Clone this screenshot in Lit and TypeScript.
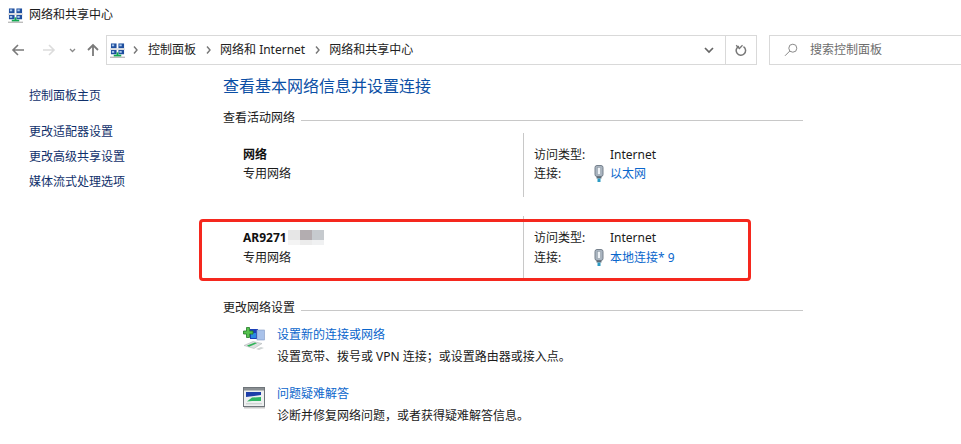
import { LitElement, html, css } from "lit";
import { customElement } from "lit/decorators.js";

const netIcon = (cls: string) => html`<svg class=${cls} viewBox="0 0 16 16" width="16" height="16">
  <rect x="1" y="0.500" width="6" height="5" fill="#1f4f9e"/><rect x="2" y="1.500" width="2.500" height="2" fill="#a9c8ee"/>
  <rect x="9" y="0.500" width="6" height="5" fill="#1f4f9e"/><rect x="10" y="1.500" width="2.500" height="2" fill="#a9c8ee"/>
  <rect x="0" y="6" width="16" height="1" fill="#c4c4c4"/>
  <rect x="1" y="7.500" width="6" height="4.500" fill="#1f4f9e"/><rect x="2" y="8.500" width="2.500" height="2" fill="#a9c8ee"/>
  <rect x="9" y="7.500" width="6" height="4.500" fill="#1f4f9e"/><rect x="10" y="8.500" width="2.500" height="2" fill="#a9c8ee"/>
  <rect x="7" y="10" width="2" height="3" fill="#12a850"/><rect x="4" y="12.500" width="8" height="2" fill="#12a850"/>
  <rect x="0" y="14.500" width="16" height="1.500" fill="#bdbdbd"/>
</svg>`;

const plug = html`<svg class="plug" viewBox="0 0 10 18" width="10" height="18">
  <rect x="1" y="0.500" width="8" height="11" rx="2" fill="#a9b4c0" stroke="#76818c"/>
  <rect x="3.500" y="2.500" width="3" height="7" fill="#eef2f6" stroke="#8c97a2" stroke-width="0.500"/>
  <rect x="2.500" y="11.500" width="5" height="2" fill="#5f6b76"/>
  <rect x="3.500" y="13.500" width="3" height="3.500" fill="#2d9bc4"/>
</svg>`;

const addIcon = html`<svg class="big" viewBox="0 0 22 24" width="22" height="24">
  <rect x="7" y="2" width="8" height="10" fill="#1a3fb8"/><rect x="8" y="6" width="5" height="5" fill="#2a8ae0"/>
  <rect x="14" y="3" width="7.500" height="10" fill="#a9c2ea" stroke="#8098c4" stroke-width="0.600"/>
  <path d="M3.500 0.500h3v3.500h3.500v3H6.500v3.500h-3V7H0.500V4h3z" fill="#56c24e" stroke="#1f7a26" stroke-width="0.800"/>
  <path d="M1 18.500l9-4 9 2-8 5z" fill="#dde0e0" stroke="#a8aeb0" stroke-width="0.500"/>
  <path d="M4 18.500l8-3 2 .8-8 3.500z" fill="#2fb358"/>
  <path d="M13 22l5-2 3 1-5 2z" fill="#cfd4d4"/>
</svg>`;

const fixIcon = html`<svg class="big low" viewBox="0 0 22 22" width="22" height="22">
  <rect x="0.500" y="0.500" width="21" height="19" fill="#eef0f0" stroke="#6f757a"/>
  <rect x="1" y="1" width="20" height="2.500" fill="#8a8f92"/>
  <path d="M3 5h15v3l-15 2z" fill="#1d3ea8"/>
  <path d="M18 10v4H9l-5 .5 5-4z" fill="#2fb562"/>
  <rect x="3" y="16" width="16" height="1.400" fill="#d0d4d4"/>
  <rect x="1" y="20" width="21" height="1.500" fill="#c8c8c8"/>
</svg>`;

@customElement("app-root")
export class AppRoot extends LitElement {
  static styles = css`
    :host {
      display: block;
      width: 961px;
      height: 444px;
      overflow: hidden;
      background: #fff;
      position: relative;
      font-family: "Noto Sans", "Noto Sans CJK SC", sans-serif;
      font-size: 12px;
      color: #1a1a1a;
      line-height: 16px;
    }
    a { color: #0a66cc; text-decoration: none; }
    .title {
      height: 30px;
      padding-left: 8px;
      display: flex;
      align-items: center;
      gap: 6px;
      box-sizing: border-box;
    }
    .title .ic { width: 15px; height: 15px; }
    .nav {
      height: 30px;
      margin-top: 5px;
      display: flex;
      align-items: center;
    }
    .arrows {
      width: 106px;
      flex: none;
      display: flex;
      align-items: center;
      height: 30px;
    }
    .arrows svg { display: block; }
    .addr {
      width: 651px;
      height: 30px;
      box-sizing: border-box;
      border: 1px solid #d9d9d9;
      display: flex;
      align-items: center;
      flex: none;
    }
    .addr .ic { margin-left: 3px; width: 15px; height: 15px; }
    .crumbs {
      flex: 1;
      display: flex;
      align-items: center;
      color: #222;
      white-space: nowrap;
    }
    .sep { width: 5px; height: 8px; margin: 0 9.500px; flex: none; }
    .first { margin: 0 10px 0 8px; }
    .drop {
      width: 32px;
      height: 28px;
      display: flex;
      align-items: center;
      justify-content: center;
    }
    .refresh {
      width: 30px;
      height: 28px;
      border-left: 1px solid #d9d9d9;
      display: flex;
      align-items: center;
      justify-content: center;
    }
    .search {
      margin-left: 12px;
      flex: 1;
      height: 30px;
      box-sizing: border-box;
      border: 1px solid #d9d9d9;
      border-right: none;
      display: flex;
      align-items: center;
      padding-left: 14px;
      gap: 12px;
      color: #6d6d6d;
    }
    .body { display: flex; }
    .side {
      width: 223px;
      flex: none;
      padding: 23px 0 0 29px;
      box-sizing: border-box;
      display: flex;
      flex-direction: column;
      color: #10306b;
    }
    .side div { height: 25px; line-height: 16px; }
    .side .home { height: 36px; }
    .main { width: 580px; flex: none; }
    h1 {
      margin: 10px 0 0;
      font-size: 16px;
      font-weight: 400;
      line-height: 22px;
      color: #0b4fa5;
    }
    .sect {
      display: flex;
      align-items: center;
      gap: 6px;
      height: 16px;
    }
    .sect::after {
      content: "";
      flex: 1;
      height: 1px;
      background: #c8c8c8;
      margin-top: 5px;
    }
    .active { margin-top: 13px; }
    .net { display: flex; height: 64px; }
    .net-a { margin-top: 7px; }
    .net-b { margin-top: 19px; height: 62px; }
    .who {
      width: 300px;
      box-sizing: border-box;
      padding: 12px 0 0 20px;
      flex: none;
    }
    .name { font-weight: 700; height: 19px; color: #111; display: flex; align-items: center; }
    .sub { line-height: 19px; }
    .net-b .sub { line-height: 21px; }
    .blur { display: flex; flex-direction: row; height: 15px; margin-left: 1px; }
    .blur i { display: block; filter: blur(0.600px); }
    .blur .b1 { width: 12px; background: linear-gradient(#e6e6e6 66%, #f4f4f4 66%); }
    .blur .b2 { width: 12px; background: linear-gradient(#b3adb0 66%, #ececec 66%); }
    .blur .b3 { width: 12px; background: linear-gradient(#c6cace 66%, #f0f1f2 66%); }
    .info {
      flex: 1;
      border-left: 1px solid #c8c8c8;
      padding: 12px 0 0 10px;
    }
    .row { display: grid; grid-template-columns: 76px auto; height: 19px; align-items: center; }
    .net-b .row + .row { height: 21px; }
    .row .plugcell { position: relative; }
    .plug { position: absolute; left: -16px; top: -1px; }
    .change { margin-top: 22px; }
    .task {
      display: grid;
      grid-template-columns: 34px auto;
      margin: 11px 0 0 20px;
      height: 51px;
    }
    .task .l { height: 22px; }
    .big { display: block; }
    .big.low { margin-top: 1px; }
    .task + .task { margin-top: 8px; }
    .redbox {
      position: absolute;
      left: 199px;
      top: 219px;
      width: 552px;
      height: 62px;
      box-sizing: border-box;
      border: 3px solid #f5281e;
      border-radius: 4px;
      pointer-events: none;
    }
  `;

  render() {
    const sep = html`<svg class="sep" viewBox="0 0 5 8"><path d="M1 .5l3 3.5-3 3.5" fill="none" stroke="#777" stroke-width="1.4"/></svg>`;
    return html`
      <div class="title">${netIcon("ic")}<span>网络和共享中心</span></div>
      <div class="nav">
        <div class="arrows">
          <svg width="106" height="30" viewBox="0 0 106 30">
            <path d="M13 15h11M18 10l-5 5 5 5" fill="none" stroke="#7a7a7a" stroke-width="1.600"/>
            <path d="M54 15H43M49 10l5 5-5 5" fill="none" stroke="#dcdcdc" stroke-width="1.600"/>
            <path d="M70 14l2.500 2.500 2.500-2.500" fill="none" stroke="#8a8a8a" stroke-width="1.300"/>
            <path d="M93 21V10M88 15l5-5 5 5" fill="none" stroke="#7a7a7a" stroke-width="1.800"/>
          </svg>
        </div>
        <div class="addr">
          ${netIcon("ic")}
          <div class="crumbs">
            <svg class="sep first" viewBox="0 0 5 8"><path d="M1 .5l3 3.500-3 3.500" fill="none" stroke="#777" stroke-width="1.400"/></svg>
            <span>控制面板</span>${sep}<span>网络和 Internet</span>${sep}<span>网络和共享中心</span>
          </div>
          <div class="drop">
            <svg width="10" height="7" viewBox="0 0 10 7"><path d="M1 1l4 4 4-4" fill="none" stroke="#666" stroke-width="1.700"/></svg>
          </div>
          <div class="refresh">
            <svg width="12" height="14" viewBox="0 0 12 14"><path d="M4 3.200A4.700 4.700 0 1 0 8.500 3.600" fill="none" stroke="#777" stroke-width="1.500"/><path d="M2.500 0.500v4.500h4.500" fill="none" stroke="#777" stroke-width="1.300" transform="rotate(-45 4 3)"/></svg>
          </div>
        </div>
        <div class="search">
          <svg width="14" height="14" viewBox="0 0 14 14"><circle cx="8.800" cy="5.200" r="4" fill="none" stroke="#8a8a8a"/><path d="M5.800 8L1 12.800" stroke="#8a8a8a" stroke-width="1"/></svg>
          <span>搜索控制面板</span>
        </div>
      </div>
      <div class="body">
        <div class="side">
          <div class="home">控制面板主页</div>
          <div>更改适配器设置</div>
          <div>更改高级共享设置</div>
          <div>媒体流式处理选项</div>
        </div>
        <div class="main">
          <h1>查看基本网络信息并设置连接</h1>
          <div class="sect active">查看活动网络</div>
          <div class="net net-a">
            <div class="who"><div class="name">网络</div><div class="sub">专用网络</div></div>
            <div class="info">
              <div class="row"><span>访问类型:</span><span>Internet</span></div>
              <div class="row"><span>连接:</span><span class="plugcell">${plug}<a>以太网</a></span></div>
            </div>
          </div>
          <div class="net net-b">
            <div class="who"><div class="name">AR9271<span class="blur"><i class="b1"></i><i class="b2"></i><i class="b3"></i></span></div><div class="sub">专用网络</div></div>
            <div class="info">
              <div class="row"><span>访问类型:</span><span>Internet</span></div>
              <div class="row"><span>连接:</span><span class="plugcell">${plug}<a>本地连接* 9</a></span></div>
            </div>
          </div>
          <div class="sect change">更改网络设置</div>
          <div class="task">
            ${addIcon}
            <div><div class="l"><a>设置新的连接或网络</a></div><div>设置宽带、拨号或 VPN 连接；或设置路由器或接入点。</div></div>
          </div>
          <div class="task">
            ${fixIcon}
            <div><div class="l"><a>问题疑难解答</a></div><div>诊断并修复网络问题，或者获得疑难解答信息。</div></div>
          </div>
        </div>
      </div>
      <div class="redbox"></div>
    `;
  }
}
